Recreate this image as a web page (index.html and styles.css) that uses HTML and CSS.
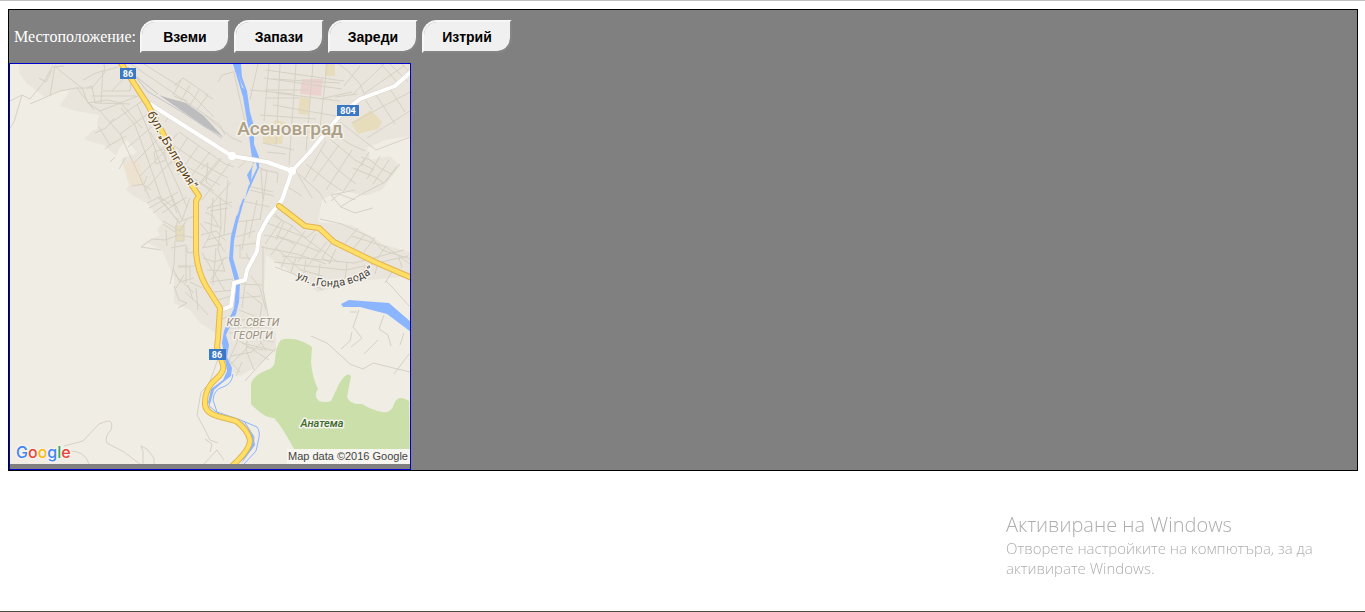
FILE: index.html
```
<!DOCTYPE html>
<html lang="bg">
<head>
<meta charset="utf-8">
<title>Местоположение</title>
<link rel="stylesheet" href="styles.css">
</head>
<body>
<main class="panel">
  <div class="toolbar">
    <span class="toolbar-label">Местоположение:</span>
    <button type="button" class="btn">Вземи</button>
    <button type="button" class="btn">Запази</button>
    <button type="button" class="btn">Зареди</button>
    <button type="button" class="btn">Изтрий</button>
  </div>
  <div class="map">
    <svg class="map-image" viewBox="10 64 400 400" role="img" aria-label="Асеновград">
      <rect class="land" x="10" y="64" width="400" height="400"/>
      <path class="urban" d="M19 64L20 74 27 84 45 97 60 91 70 90 60 106 76 111 99 115 97 124 100 128 93 130 84 139 105 146 116 156 120 147 127 140 137 153 121 159 129 185 126 190 135 197 147 203 162 223 157 230 160 235 140 245 148 243 162 250 174 278 174 303 190 310 200 323 216 333 232 372 240 376 262 363 276 350 276 335 268 316 264 290 266 255 276 262 318 292 352 282 410 276V252L385 245 365 233 352 225 318 222 322 200 340 190 365 196 382 190 400 166 390 156 371 160 367 148 385 140 410 136V64Z"/>
      <path class="sand" d="M123 164L138 159 145 184 131 187Z"/>
      <path class="tan" d="M325 64H335V76H325ZM300 97L310 98 308 115 298 114ZM263 137L275 120 285 122 282 144H263ZM351 123L371 110 382 122 378 129 358 134ZM176 225H184V241H175Z"/>
      <path class="pink" d="M302 79L323 79 321 96 300 94Z"/>
      <path class="park" d="M281 340C291 337 302 340 312 347L311 362Q312 377 318 389Q313 396 319 401Q326 403 331 401L339 384Q347 371 351 376L347 397Q350 405 362 404Q372 410 382 412 391 414 394 404 398 394 409 401L410 464H300L294 449Q283 428 274 418 265 419 251 404L251 384Q253 376 265 371 275 368 275 360 276 345 281 340Z"/>

      <g class="minor">
        <!-- north-west quarter -->
        <path d="M10 101L22 95 30 99 44 82 52 67 64 66M22 95L14 122 10 128M30 104L60 91 76 88 92 88 105 72 104 64M39 78L46 82 52 70M50 96L55 66 64 74 82 88 88 103 100 111 120 134 150 199M76 87L94 110M83 80L96 73 118 67M87 88L92 86 95 103 130 104M103 70L101 103M103 91H130L132 75M92 96L136 96M112 91L124 78M88 103L107 100 121 103 142 128M100 111L138 96M109 124L142 101M120 134L153 110M128 147L160 120M134 163L165 132M139 177L169 147M144 191L174 158M95 133L106 128 114 118M98 126L110 145 105 149M110 145L126 136M115 157L110 162M119 169L126 157M132 186L144 184 147 176M144 185L151 190"/>
        <path d="M121 108L135 125 149 163 163 204M137 104L149 132 163 172 177 213M150 132L163 154 177 184 187 207M159 149L167 145M154 152L164 149 166 160 156 164ZM147 203L160 197 172 206 187 197M149 208L178 192M153 213L173 199M157 196L179 222 199 214M172 196L182 220 190 198M164 203L180 224M162 213L179 202"/>
        <path d="M131 64L220 125 225 135M144 64L190 93 214 117M174 86L183 78 208 95 196 111M174 96L187 101M181 80L173 95M190 85L180 102M199 90L189 107M165 122L170 115M178 133L166 147M188 137L170 165M199 145L178 175M210 152L186 183M220 158L194 190M170 143L198 162 228 178M179 132L225 164 234 167M176 161L220 185M180 170L214 191M201 169L208 163 206 182 211 186M194 192L222 158M202 200L230 163M207 210L231 182M196 180L232 207"/>
        <!-- north centre grid -->
        <path d="M280 64L276 145M296 64L289 165M313 64L306 151M327 64L319 137M266 70L344 81M264 78L342 89M276 93L340 101M273 105L336 116M277 126L320 134M260 115L316 119M263 143L294 150M267 152L286 154M273 79L340 83M265 90L308 90M267 98H299M250 90L294 94M218 82L222 75 241 70M205 94L213 99M205 115L232 138 242 142M234 73L246 126M258 64L250 100M269 64L264 121"/>
        <path d="M339 64L349 72 360 84 365 96M344 86L360 66M353 94L384 64M365 93L405 65M381 64L398 83M390 64L408 82M402 64L410 73M335 97L357 94M320 99L352 92M363 96L372 110M376 95L395 124M390 89L405 112M352 123L410 92M367 138L410 111M330 139L355 160 374 170M320 150L339 171 356 184M306 164L329 182 342 191M299 174L320 193 326 203M326 141L304 180M339 145L313 181M352 150L326 190M365 158L343 192M332 133L350 144 365 151M340 122L376 150 410 137"/>
        <path d="M361 157L370 160 380 168 391 174M353 168L375 177 384 183M369 152L361 166M380 156L367 179M389 160L373 184M400 164L385 182M331 201L339 194 355 200M296 171L312 198M286 186L302 196M260 169L278 173 277 183M248 186L273 192M261 169L263 199"/>
        <!-- west bank -->
        <path d="M161 250L141 247 152 239 165 240 179 235 196 238M163 224L175 232 178 218M163 221L180 231 187 219M166 230L167 246M176 225L176 241H184L184 225M171 248L186 245 188 253 195 252M175 241L174 265 170 284M178 267H190V278M175 275L194 293M173 269L180 282 194 278M186 247L186 283M178 266H195M176 288L184 275M174 286L179 300 187 303 178 308M188 285L193 300M190 282L202 288M185 292L200 306 208 315M196 288L198 310M205 212L213 216 218 226M204 222L222 228M201 235L216 231 226 241M202 248L222 244M203 258L215 262 228 257M207 270L225 271M210 282L233 279M214 292L234 290M218 300L231 296M207 208L232 202M213 198L211 232 225 252M220 197L221 225 218 249 225 272M228 180L226 207 224 235M216 248L213 285M202 253L225 291M207 240L232 233M228 208L210 211M200 223L210 235 203 248M224 259L211 280"/>
        <!-- east bank -->
        <path d="M238 168L249 158M254 165L267 171 264 194 260 220M250 190L274 196M242 201L270 207M236 222L261 219M236 237L255 231M235 246L257 243M241 258H250M240 244V258M247 220L242 250M257 200L249 238M246 253L249 260M246 277L242 308M241 284L262 285M238 298L261 296M239 310L260 318M246 292L262 304 260 317M251 276L260 288 266 310M263 246L263 290 270 325M241 320L267 319M229 328L270 327M242 343L275 351M231 356L252 352 262 342M229 366L248 347 263 350M238 340L229 360 240 372M248 335L246 350 254 370M257 335L266 351M263 340L274 342M235 338L269 360M242 362L236 376M245 381L262 362 276 348M220 320L232 315M229 333L247 331"/>
        <!-- south-east strip -->
        <path d="M271 211L284 222 276 240M267 223L302 236 338 262M264 235L289 240 321 252M261 247L297 254 326 264M274 216L291 225 306 238 316 230M276 235L295 244M282 220L265 244M293 225L271 255M305 231L287 257M316 234L298 262M327 242L307 267M336 249L329 264M276 248L301 270 323 276M275 267L294 274 323 290M282 256L354 263 404 250M274 262L309 266 346 270 408 256M286 256L281 268M296 258L291 272M306 260L303 278M320 264L318 284M347 263L345 279M365 266L360 280M378 263L375 274M393 270L385 283M399 258L402 268M345 243L358 228M353 249L365 234M364 252L375 237M377 259L386 246M352 236L386 247 410 264M332 242L322 258 331 263"/>
        <path d="M320 219L342 224 372 238 382 250 410 259M340 207L360 195 385 182 397 166M341 207L355 213 373 208M341 207L331 195 355 190M386 281L393 288 409 306M350 312L357 312M359 310L353 327 362 338 351 347M384 315L379 329 388 335 391 346M400 345L404 333M311 336L327 343 350 364 363 369 373 363 410 372M341 349L350 341 352 332M364 354L378 340M394 374L409 354"/>
        <!-- south-west tracks -->
        <path d="M64 446L83 441 99 424 107 421Q114 420 111 430 104 437 107 443L124 452 140 464M70 451Q85 451 89 464M143 464V451L141 446 147 449 154 458V464M218 359L209 384 201 392 197 415 204 428 210 440 218 443M204 464L217 450 224 460M205 439L212 444 210 452"/>
      </g>
      <path class="rail" d="M128 67L147 91 182 112 222 138M134 75L158 94"/>
      <path class="rail-yard" d="M159 95L168 98 186 103 204 116 223 137 204 126 188 115Z"/>

      <path class="river" d="M233 64H241L242 77 247 91 250 112 254 126 254 144 259 157 259 168 253 181 244 201 238 222 234 241 233 258 240 282 239 302 236 314 226 335 229 345 227 357 232 368 231 376 222 383 214 390 210 404 208 403 211 389 223 380 227 371 225 360 222 343 224 331 234 308 236 286 229 259 231 236 236 217 242 201 250 183 247 175 253 165 250 144 248 127 243 97Z"/>
      <path class="island" d="M238 72L241 82 244 89 242 87ZM255 157L257 168 251 180 252 169ZM242 198L248 187 245 199ZM237 212L240 208 237 216Z"/>
      <path class="stream" d="M233 374Q232 384 223 387 214 389 213 400L217 412 238 419 257 427Q261 432 258 442L256 451 244 464M244 421L254 437 253 447 242 460M211 393L209 406 219 414"/>
      <path class="river" d="M341 304L349 300 389 303 411 322V332L387 314 360 307 343 307Z"/>
      <path class="river" d="M242 421L253 435 255 445 241 464 251 445 250 435Z"/>

      <path class="white-case" d="M150 104L232 156 267 162 292 171 309 153 342 113 360 99 395 86 412 71M292 171L282 200 268 218 259 235 257 251 247 270 245 280 234 283 231 306 221 310"/>
      <g class="white-road">
        <path d="M150 104L232 156 267 162 292 171 309 153 342 113 360 99 395 86 412 71M292 171L282 200 268 218 259 235 257 251 247 270 245 280 234 283 231 306 221 310"/>
        <circle cx="232" cy="156" r="2"/>
        <circle cx="292" cy="171" r="2"/>
      </g>
      <path class="gold-case" d="M119 60L148 105 170 147 183 172 199 196 196 201V251Q197 270 206 286L220 308 218 338 217 347 223 365Q225 371 216 379 205 388 205 402 204 412 217 416L236 421Q248 430 250 440 250 450 232 466M279 206L305 226 319 228 334 242 375 262 412 278"/>
      <path class="gold-road" d="M119 60L148 105 170 147 183 172 199 196 196 201V251Q197 270 206 286L220 308 218 338 217 347 223 365Q225 371 216 379 205 388 205 402 204 412 217 416L236 421Q248 430 250 440 250 450 232 466M279 206L305 226 319 228 334 242 375 262 412 278"/>

      <g class="shield">
        <rect x="120" y="68" width="16" height="11"/><text x="128" y="77">86</text>
        <rect x="337" y="105" width="22" height="11"/><text x="348" y="114">804</text>
        <rect x="209" y="349" width="17" height="11"/><text x="217" y="358">86</text>
      </g>
      <path id="bulgaria" class="guide" d="M147 114L166 148 200 205"/>
      <path id="gonda" class="guide" d="M296 278Q337 299 378 269"/>
      <text class="street brown"><textPath href="#bulgaria">бул. „България“</textPath></text>
      <text class="street"><textPath href="#gonda">ул. „Гонда вода“</textPath></text>
      <text class="city" x="290" y="135">Асеновград</text>
      <text class="quarter" x="253" y="326">КВ. СВЕТИ</text>
      <text class="quarter" x="253" y="339">ГЕОРГИ</text>
      <text class="park-name" x="322" y="427">Анатема</text>
      <text class="logo" x="16" y="458"><tspan class="g-blue">G</tspan><tspan class="g-red">o</tspan><tspan class="g-yellow">o</tspan><tspan class="g-blue">g</tspan><tspan class="g-green">l</tspan><tspan class="g-red">e</tspan></text>
      <rect class="credit-back" x="287" y="449" width="123" height="15"/>
      <text class="credit" x="408" y="460">Map data ©2016 Google</text>
    </svg>
  </div>
</main>
<aside class="activation">
  <p class="activation-title">Активиране на Windows</p>
  <p class="activation-text">Отворете настройките на компютъра, за да активирате Windows.</p>
</aside>
</body>
</html>
```
FILE: styles.css
```
* { box-sizing: border-box; }
body {
  margin: 0;
  min-height: 100vh;
  padding: 8px 7px 8px 8px;
  border-top: 1px solid #c0c0c0;
  border-bottom: 1px solid #4c4a40;
  background: #fff;
  font: 16px "Liberation Serif", "Times New Roman", serif;
}
.panel { border: 1px solid #000; background: #808080; }
.toolbar {
  display: flex;
  flex-wrap: wrap;
  align-items: center;
  gap: 4px;
  padding: 10px 5px;
}
.toolbar-label { color: #fff; }
.btn {
  width: 90px;
  height: 33px;
  padding: 0;
  border: 2px solid;
  border-color: #f7f7f7 #858585 #858585 #f7f7f7;
  border-radius: 15px 0;
  background: #f0f0f0;
  background-clip: padding-box;
  color: #000;
  font: bold 14px "Liberation Sans", Arial, sans-serif;
}
.map {
  width: fit-content;
  padding-bottom: 5px;
  border: 1px solid #00c;
}
.map-image { display: block; width: 400px; height: 400px; font-family: Roboto, sans-serif; }
.land { fill: #f0ede5; }
.urban { fill: #e9e5dc; }
.sand { fill: #ede1cf; }
.tan { fill: #e7ddbd; }
.pink { fill: #ebd2cf; }
.park { fill: #cadfaa; }
.minor { fill: none; stroke: #d6d1c5; stroke-width: 1; }
.rail { fill: none; stroke: #c6c6c6; stroke-width: 1; }
.rail-yard { fill: #bdbdbf; }
.river { fill: #8cb5ff; }
.island { fill: #e9e5dc; }
.stream { fill: none; stroke: #8cb5ff; stroke-width: 1; }
.white-case, .white-road, .gold-case, .gold-road { fill: none; stroke-linejoin: round; stroke-linecap: round; }
.white-case { stroke: #d9d4c8; stroke-width: 5; }
.white-road { stroke: #fff; stroke-width: 4; }
.gold-case { stroke: #e3b552; stroke-width: 6; }
.gold-road { stroke: #ffdf66; stroke-width: 4; }
.shield rect { fill: #3b78c4; }
.shield text { fill: #fff; font-size: 9px; font-weight: 700; text-anchor: middle; }
.guide { fill: none; }
.street, .city, .quarter, .park-name, .logo { paint-order: stroke; stroke: #f5f2ec; stroke-width: 3; stroke-linejoin: round; }
.street { fill: #44403a; font-size: 11px; }
.brown { fill: #5c3f12; font-size: 12px; }
.city { fill: #aca087; font-size: 19px; font-weight: 500; text-anchor: middle; }
.quarter { fill: #9b9082; font-size: 11px; font-style: italic; text-anchor: middle; }
.park-name { fill: #3d6b2c; font-size: 11px; font-style: italic; font-weight: 500; text-anchor: middle; }
.logo { font: 500 16px Inter, sans-serif; }
.g-blue { fill: #4285f4; }
.g-red { fill: #ea4335; }
.g-yellow { fill: #fbbc05; }
.g-green { fill: #34a853; }
.credit-back { fill: #f7f5f0; }
.credit { fill: #444; font: 11px "Liberation Sans", Arial, sans-serif; text-anchor: end; }
.activation {
  position: fixed;
  right: 39px;
  bottom: 34px;
  width: 320px;
  color: #adadad;
  font-family: "Open Sans", "Noto Sans", sans-serif;
  font-weight: 300;
}
.activation p { margin: 0; }
.activation-title { font-size: 20px; line-height: 26px; }
.activation-text { font-size: 15px; line-height: 20px; }
```
